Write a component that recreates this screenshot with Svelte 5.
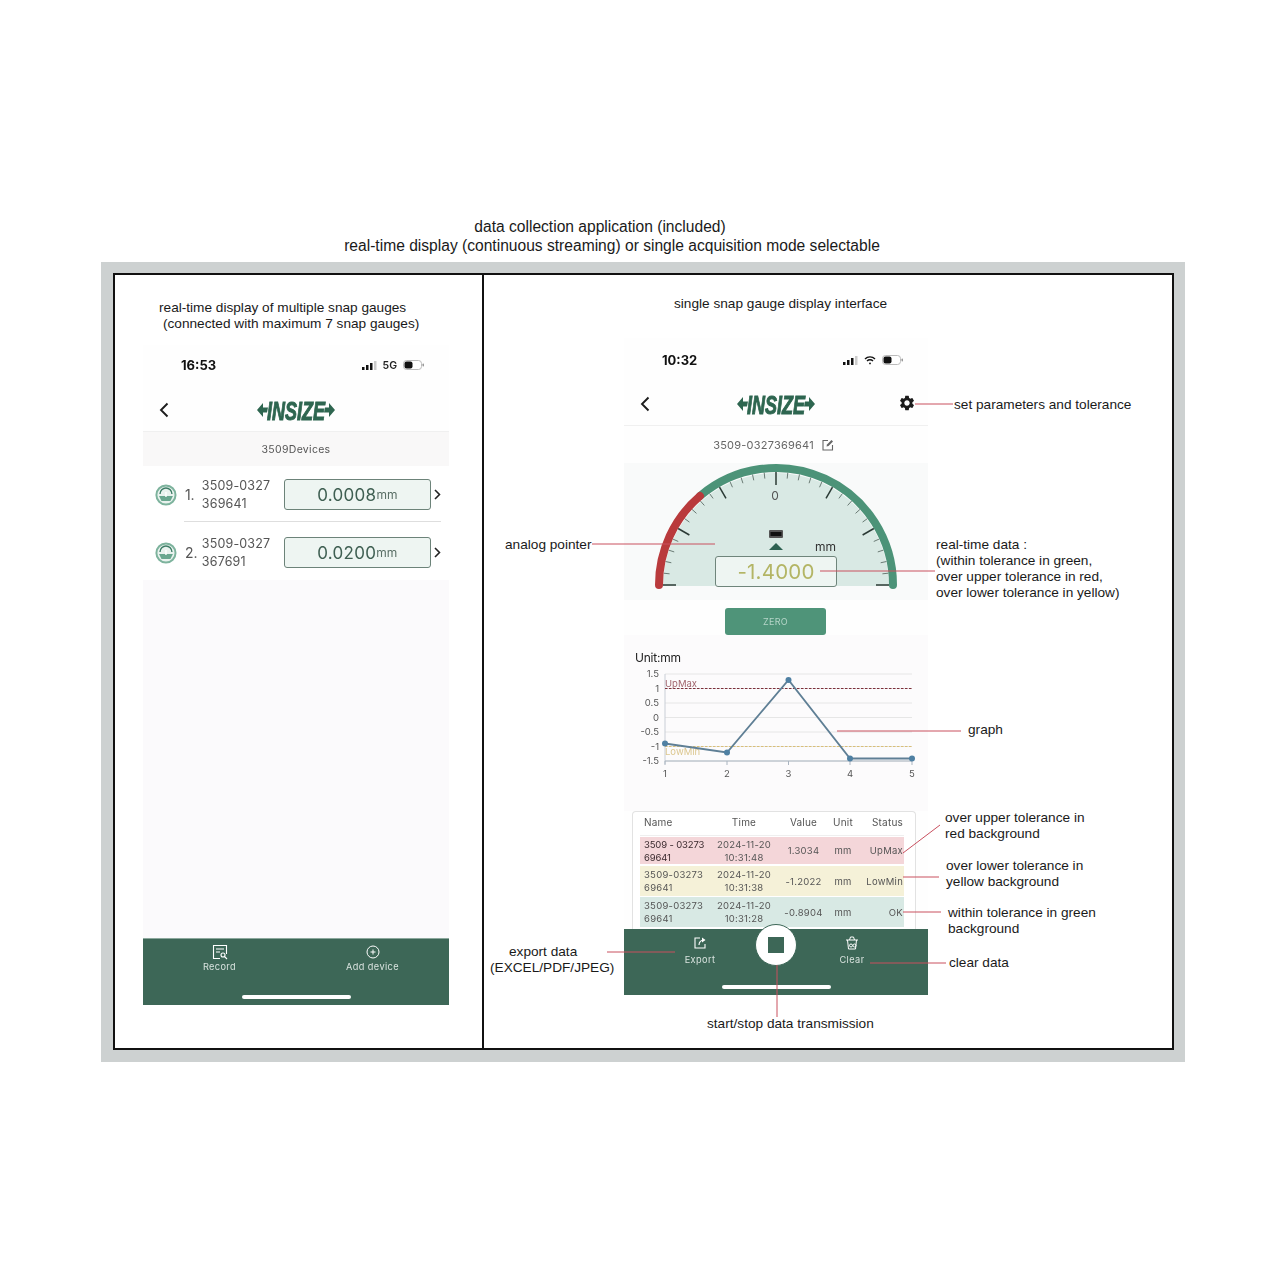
<script lang="ts">
  const notes = [
    { x: 954, y: 403.5, lines: ['set parameters and tolerance'] },
    { x: 505, y: 543.5, lines: ['analog pointer'] },
    {
      x: 936,
      y: 543.5,
      lines: ['real-time data :', '(within tolerance in green,', 'over upper tolerance in red,', 'over lower tolerance in yellow)']
    },
    { x: 968, y: 728.5, lines: ['graph'] },
    { x: 945, y: 816.5, lines: ['over upper tolerance in', 'red background'] },
    { x: 946, y: 864.5, lines: ['over lower tolerance in', 'yellow background'] },
    { x: 948, y: 911.5, lines: ['within tolerance in green', 'background'] },
    { x: 949, y: 961.5, lines: ['clear data'] },
    { x: 707, y: 1022.5, lines: ['start/stop data transmission'] }
  ];

  // leader lines, page coordinates
  const leaders = [
    [915, 404, 953, 404],
    [592, 544, 715, 544],
    [820, 571, 935, 571],
    [837, 731, 961, 731],
    [903, 853, 940, 825],
    [903, 877, 939, 877],
    [903, 912, 941, 912],
    [870, 963, 946, 963],
    [607, 952, 675, 952],
    [777, 965, 777, 1017]
  ];

  const devices = [
    { no: '1.', top: '3509-0327', bottom: '369641', value: '0.0008' },
    { no: '2.', top: '3509-0327', bottom: '367691', value: '0.0200' }
  ];

  const records = [
    { name: '3509 - 03273', sn: '69641', date: '2024-11-20', time: '10:31:48', value: '1.3034', status: 'UpMax', kind: 'up' },
    { name: '3509-03273', sn: '69641', date: '2024-11-20', time: '10:31:38', value: '-1.2022', status: 'LowMin', kind: 'low' },
    { name: '3509-03273', sn: '69641', date: '2024-11-20', time: '10:31:28', value: '-0.8904', status: 'OK', kind: 'ok' }
  ];

  // gauge ticks every 6 degrees, long one every 30
  const cx = 776;
  const cy = 585;
  const ticks = [];
  for (let a = -90; a <= 90; a += 6) {
    const rad = (a * Math.PI) / 180;
    const major = a % 30 === 0;
    const r1 = 113;
    const r2 = major ? 100 : 107;
    ticks.push({
      major,
      x1: cx + r1 * Math.sin(rad),
      y1: cy - r1 * Math.cos(rad),
      x2: cx + r2 * Math.sin(rad),
      y2: cy - r2 * Math.cos(rad)
    });
  }

  const yAxis = [
    ['1.5', 674],
    ['1', 688.5],
    ['0.5', 703],
    ['0', 717.5],
    ['-0.5', 732],
    ['-1', 746.5],
    ['-1.5', 761]
  ];
  const xAxis = [
    ['1', 665],
    ['2', 727],
    ['3', 788.5],
    ['4', 850],
    ['5', 912]
  ];
  const points = [
    [665, 743.5],
    [727, 752.5],
    [788.5, 680],
    [850, 758.5],
    [912, 758.5]
  ];
</script>

{#snippet logo()}
  <svg class="logo" viewBox="0 0 80 24" width="80" height="24" aria-label="INSIZE">
    <polygon points="1,12 7,5 7,9.5 12,9.5 11,14.5 7,14.5 7,19" />
    <polygon points="79,12 73,5 73,9.5 69,9.5 68,14.5 73,14.5 73,19" />
    <text x="11" y="21.500" textLength="58" lengthAdjust="spacingAndGlyphs">INSIZE</text>
  </svg>
{/snippet}

{#snippet signal()}
  <svg width="15" height="9" viewBox="0 0 15 9">
    <rect x="0" y="6" width="2.5" height="3" fill="#111" />
    <rect x="4" y="4" width="2.5" height="5" fill="#111" />
    <rect x="8" y="2" width="2.5" height="7" fill="#111" />
    <rect x="12" y="0" width="2.5" height="9" fill="#ccc" />
  </svg>
{/snippet}

{#snippet battery()}
  <svg width="22" height="10" viewBox="0 0 22 10">
    <rect x="0.5" y="0.5" width="18" height="9" rx="3" fill="#fff" stroke="#bbb" />
    <rect x="1.5" y="1.5" width="8" height="7" rx="2" fill="#111" />
    <rect x="19.5" y="3.5" width="1.5" height="3" rx="0.7" fill="#999" />
  </svg>
{/snippet}

{#snippet back()}
  <svg class="back" width="10" height="16" viewBox="0 0 10 16">
    <path d="M8.5 1.5 2 8l6.5 6.5" fill="none" stroke="#1c1c1c" stroke-width="1.9" />
  </svg>
{/snippet}

{#snippet chevron()}
  <svg width="7" height="11" viewBox="0 0 7 11">
    <path d="M1 1l4.5 4.5L1 10" fill="none" stroke="#222" stroke-width="1.6" />
  </svg>
{/snippet}

{#snippet gaugeIcon()}
  <svg width="22" height="22" viewBox="0 0 22 22">
    <circle cx="11" cy="11" r="9.6" fill="#e9f2ee" stroke="#7db39d" stroke-width="2" />
    <path d="M5 10a6 6 0 0 1 12 0" fill="none" stroke="#3e7d66" stroke-width="1.4" />
    <path d="M4 12h14l-2.5 5h-9z" fill="#6aa78f" />
    <path d="M11 8v5" stroke="#fff" stroke-width="1.4" />
  </svg>
{/snippet}

<div class="page">
  <div class="heading">
    <p class="heading-first">data collection application (included)</p>
    <p>real-time display (continuous streaming) or single acquisition mode selectable</p>
  </div>

  <div class="frame">
    <div class="sheet">
      <section class="panel panel-left">
        <div class="caption caption-left">
          <p>real-time display of multiple snap gauges</p>
          <p class="caption-second">(connected with maximum 7 snap gauges)</p>
        </div>

        <div class="phone phone-left">
          <div class="status">
            <span class="clock">16:53</span>
            <span class="status-icons">
              {@render signal()}
              <span class="fiveg">5G</span>
              {@render battery()}
            </span>
          </div>
          <div class="topbar">
            {@render back()}
            {@render logo()}
          </div>
          <div class="band">3509Devices</div>
          <div class="devices">
            {#each devices as d, i}
              <div class="device" class:device-last={i === devices.length - 1}>
                {@render gaugeIcon()}
                <span class="device-no">{d.no}</span>
                <span class="device-name">{d.top}<br />{d.bottom}</span>
                <span class="reading"><b>{d.value}</b><small>mm</small></span>
                {@render chevron()}
              </div>
            {/each}
          </div>
          <div class="empty"></div>
          <div class="tabbar tabbar-left">
            <div class="tabs">
              <div class="tab">
                <svg width="16" height="16" viewBox="0 0 16 16" fill="none" stroke="#fff" stroke-width="1.1">
                  <path d="M8 14.5H1.5v-13h13V10" />
                  <path d="M4 5h8M4 8h4" />
                  <circle cx="11" cy="11" r="2" />
                  <path d="M12.5 12.5 15 15" />
                </svg>
                <span>Record</span>
              </div>
              <div class="tab">
                <svg width="16" height="16" viewBox="0 0 16 16" fill="none" stroke="#fff" stroke-width="1">
                  <circle cx="8" cy="8" r="6" />
                  <path d="M5.5 8h5M8 5.5v5" />
                </svg>
                <span>Add device</span>
              </div>
            </div>
            <i class="home"></i>
          </div>
        </div>
      </section>

      <section class="panel panel-right">
        <div class="caption caption-right"><p>single snap gauge display interface</p></div>

        <div class="phone phone-right">
          <div class="status">
            <span class="clock">10:32</span>
            <span class="status-icons">
              {@render signal()}
              <svg width="12" height="9" viewBox="0 0 12 9" fill="none" stroke="#111" stroke-width="1.4">
                <path d="M1 3a7 7 0 0 1 10 0M3 5a4.2 4.2 0 0 1 6 0" />
                <circle cx="6" cy="7.4" r="0.9" fill="#111" stroke="none" />
              </svg>
              {@render battery()}
            </span>
          </div>
          <div class="topbar topbar-line">
            {@render back()}
            {@render logo()}
            <svg class="gear" width="18" height="18" viewBox="0 0 24 24">
              <path
                fill="#1c1c1c"
                d="M19.14 12.94c.04-.3.06-.61.06-.94 0-.32-.02-.64-.07-.94l2.03-1.58a.49.49 0 0 0 .12-.61l-1.92-3.32a.488.488 0 0 0-.59-.22l-2.39.96c-.5-.38-1.03-.7-1.62-.94l-.36-2.54a.484.484 0 0 0-.48-.41h-3.84c-.24 0-.43.17-.47.41l-.36 2.54c-.59.24-1.13.57-1.62.94l-2.39-.96c-.22-.08-.47 0-.59.22L2.74 8.87c-.12.21-.08.47.12.61l2.03 1.58c-.05.3-.09.63-.09.94s.02.64.07.94l-2.03 1.58a.49.49 0 0 0-.12.61l1.92 3.32c.12.22.37.29.59.22l2.39-.96c.5.38 1.03.7 1.62.94l.36 2.54c.05.24.24.41.48.41h3.84c.24 0 .44-.17.47-.41l.36-2.54c.59-.24 1.13-.56 1.62-.94l2.39.96c.22.08.47 0 .59-.22l1.92-3.32c.12-.22.07-.47-.12-.61l-2.01-1.58zM12 15.6c-1.98 0-3.6-1.62-3.6-3.6s1.62-3.6 3.6-3.6 3.6 1.62 3.6 3.6-1.62 3.6-3.6 3.6z"
              />
            </svg>
          </div>
          <div class="serial">
            <span>3509-0327369641</span>
            <svg width="12" height="12" viewBox="0 0 12 12" fill="none" stroke="#666" stroke-width="1.1">
              <path d="M6 1.5H1v9.5h9.5V6" />
              <path d="M4.5 7.5 5 5.5 9.5 1l1.5 1.5L6.500 7z" fill="#666" stroke="none" />
            </svg>
          </div>

          <div class="gauge">
            <svg viewBox="624 463 304 137" width="304" height="137">
              <path d="M663 586a113 113 0 0 1 226 0z" fill="#d9e9e4" />
              {#each ticks as t}
                <line
                  x1={t.x1}
                  y1={t.y1}
                  x2={t.x2}
                  y2={t.y2}
                  stroke={t.major ? '#2b3a35' : '#5e6e68'}
                  stroke-width={t.major ? 1.5 : 0.9}
                />
              {/each}
              <path d="M893 585A117 117 0 0 0 700 496" fill="none" stroke="#4c9378" stroke-width="8" stroke-linecap="round" />
              <path d="M700 496A117 117 0 0 0 659 585" fill="none" stroke="#b93a3c" stroke-width="8" stroke-linecap="round" />
              <text class="gauge-zero" x="775" y="500">0</text>
              <text class="gauge-unit" x="815" y="551">mm</text>
              <rect x="769" y="530" width="14" height="8" rx="1" fill="#555" />
              <rect x="770.500" y="532" width="11" height="4" fill="#111" />
              <polygon points="776,543 783,550 769,550" fill="#2d6151" />
            </svg>
            <div class="gauge-value">-1.4000</div>
          </div>

          <button class="zero">ZERO</button>

          <div class="chart">
            <span class="unit">Unit:mm</span>
            <svg viewBox="624 665 304 120" width="304" height="120">
              {#each yAxis as [label, y]}
                <line x1="665" x2="912" y1={y} y2={y} stroke="#e6e6e6" stroke-width="1" />
                <text class="tick" x="659" y={+y + 3} text-anchor="end">{label}</text>
              {/each}
              <line x1="665" x2="665" y1="674" y2="764" stroke="#c9ced6" />
              <line x1="665" x2="912" y1="761" y2="761" stroke="#a9b4c0" />
              {#each xAxis as [label, x]}
                <line x1={x} x2={x} y1="761" y2="765" stroke="#a9b4c0" />
                <text class="tick" x={x} y="777" text-anchor="middle">{label}</text>
              {/each}
              <line x1="665" x2="912" y1="688.500" y2="688.500" stroke="#7d2f3a" stroke-width="1" stroke-dasharray="2.500 1.500" />
              <line x1="665" x2="912" y1="746.500" y2="746.500" stroke="#d9bf78" stroke-width="1" stroke-dasharray="2.500 1.500" />
              <text class="limit" x="665" y="687" fill="#a0646c">UpMax</text>
              <text class="limit" x="665" y="755" fill="#dcc78f">LowMin</text>
              <polyline points={points.map((p) => p.join(',')).join(' ')} fill="none" stroke="#5f7f95" stroke-width="1.800" />
              {#each points as [x, y]}
                <circle cx={x} cy={y} r="3" fill="#4f80a3" />
              {/each}
            </svg>
          </div>

          <div class="records">
            <div class="records-head">
              <span>Name</span>
              <span>Time</span>
              <span>Value</span>
              <span>Unit</span>
              <span>Status</span>
            </div>
            {#each records as r}
              <div class="record {r.kind}">
                <span class="record-name">{r.name}<br />{r.sn}</span>
                <span>{r.date}<br />{r.time}</span>
                <span>{r.value}</span>
                <span>mm</span>
                <span>{r.status}</span>
              </div>
            {/each}
          </div>

          <div class="tabbar tabbar-right">
            <div class="tabs">
              <div class="tab">
                <svg width="16" height="16" viewBox="0 0 16 16" fill="none" stroke="#fff" stroke-width="1.1">
                  <path d="M8 3H3v10h10V9" />
                  <path d="M7 10c0-3 2-5 5-5" />
                  <path d="M10 2.500 13.500 5 10 7.500z" fill="#fff" stroke="none" />
                </svg>
                <span>Export</span>
              </div>
              <div class="tab">
                <svg width="16" height="16" viewBox="0 0 16 16" fill="none" stroke="#fff" stroke-width="1">
                  <path d="M2 5h12M5.500 5 6.500 2h3l1 3M3.500 5l1 9h7l1-9" />
                  <circle cx="7" cy="10.500" r="1.500" />
                  <circle cx="10.500" cy="10.500" r="1.500" />
                </svg>
                <span>Clear</span>
              </div>
            </div>
            <button class="stop" aria-label="Stop"><i></i></button>
            <i class="home"></i>
          </div>
        </div>
      </section>
    </div>
  </div>

  <!-- callouts sit over the picture -->
  <svg class="leaders" viewBox="0 0 1285 1285" width="1285" height="1285">
    {#each leaders as [x1, y1, x2, y2]}
      <line {x1} {y1} {x2} {y2} stroke="#c9505f" stroke-width="1" />
    {/each}
  </svg>
  {#each notes as n}
    <div class="note" style="left:{n.x}px;top:{n.y - 7}px">
      {#each n.lines as line}<div>{line}</div>{/each}
    </div>
  {/each}
  <div class="note note-export">
    <div class="note-export-first">export data</div>
    <div>(EXCEL/PDF/JPEG)</div>
  </div>
</div>

<style>
  :global(body) {
    margin: 0;
    background: #fff;
  }

  p {
    margin: 0;
  }

  .page {
    position: relative;
    width: 1285px;
    height: 1285px;
    padding-top: 218px;
    box-sizing: border-box;
    overflow: hidden;
    font-family: 'Liberation Sans', Arial, sans-serif;
    color: #1a1a1a;
  }

  .heading {
    height: 44px;
    text-align: center;
    font-size: 15.6px;
    line-height: 18.5px;
    margin-left: -61px;
  }

  .heading-first {
    padding-right: 24px;
  }

  .frame {
    box-sizing: border-box;
    margin-left: 101px;
    width: 1084px;
    height: 800px;
    padding: 11px 11px 12px 12px;
    background: #cdd1d1;
  }

  .sheet {
    display: grid;
    grid-template-columns: 369px 1fr;
    height: 100%;
    box-sizing: border-box;
    border: 2px solid #111;
    background: #fff;
  }

  .panel {
    min-width: 0;
  }

  .panel-left {
    border-right: 2px solid #111;
    box-sizing: border-box;
  }

  .caption {
    font-size: 13.65px;
    line-height: 16px;
  }

  .caption-left {
    height: 70px;
    padding: 25px 0 0 44px;
    box-sizing: border-box;
  }

  .caption-second {
    padding-left: 4px;
  }

  .caption-right {
    height: 63px;
    padding: 21px 0 0 190px;
    box-sizing: border-box;
  }

  .phone {
    display: flex;
    flex-direction: column;
    background: #fefefe;
    font-family: Inter, 'Liberation Sans', sans-serif;
    filter: blur(0.3px);
  }

  .phone-left {
    width: 306px;
    height: 660px;
    margin-left: 28px;
  }

  .phone-right {
    width: 304px;
    height: 657px;
    margin-left: 140px;
  }

  .status {
    display: flex;
    align-items: center;
    justify-content: space-between;
    height: 40px;
    padding: 0 24px 0 38px;
    flex: none;
  }

  .phone-right .status {
    height: 44px;
  }

  .clock {
    font-size: 13px;
    font-weight: 700;
    color: #111;
  }

  .status-icons {
    display: flex;
    align-items: center;
    gap: 6px;
  }

  .fiveg {
    font-size: 10.5px;
    font-weight: 600;
    color: #222;
  }

  .topbar {
    position: relative;
    display: flex;
    align-items: center;
    justify-content: center;
    height: 47px;
    padding-top: 3px;
    flex: none;
    border-bottom: 1px solid #f0f0f0;
    box-sizing: border-box;
  }

  .back {
    position: absolute;
    left: 16px;
    top: 17px;
  }

  .phone-right .topbar {
    height: 44px;
    padding-top: 0;
  }

  .phone-right .back {
    top: 14px;
  }

  .gear {
    position: absolute;
    right: 12px;
    top: 12px;
  }

  .logo {
    fill: #2e6650;
    overflow: visible;
  }

  .logo text {
    font-family: 'Liberation Sans', sans-serif;
    font-size: 26px;
    font-weight: 700;
    font-style: italic;
    stroke: #2e6650;
    stroke-width: 1px;
  }

  .band {
    height: 34px;
    flex: none;
    display: flex;
    align-items: center;
    justify-content: center;
    padding-top: 1px;
    box-sizing: border-box;
    background: #f9f8f8;
    font-size: 10.5px;
    letter-spacing: 0.3px;
    color: #555;
  }

  .devices {
    flex: none;
    background: #fff;
    padding: 13px 8px 0 12px;
    height: 114px;
    box-sizing: border-box;
  }

  .device {
    display: flex;
    align-items: center;
    height: 31px;
    padding-bottom: 12px;
    margin-bottom: 14px;
    border-bottom: 1px solid transparent;
    position: relative;
  }

  .device:not(.device-last)::after {
    content: '';
    position: absolute;
    left: 29px;
    right: 0;
    bottom: 0;
    height: 1.5px;
    background: #dedede;
  }

  .device-last {
    padding-bottom: 0;
    margin-bottom: 0;
    border: 0;
  }

  .device-no {
    font-size: 14px;
    color: #555;
    margin-left: 8px;
    width: 17px;
  }

  .device-name {
    font-size: 12.5px;
    line-height: 18px;
    letter-spacing: 0.15px;
    color: #555;
    width: 82px;
  }

  .reading {
    box-sizing: border-box;
    width: 148px;
    height: 31px;
    display: flex;
    align-items: center;
    justify-content: center;
    border: 1.5px solid #6c8379;
    border-radius: 3px;
    background: #eef5f2;
    color: #3f5f52;
    margin-right: 3px;
  }

  .reading b {
    font-weight: 400;
    font-size: 17px;
    letter-spacing: 0.3px;
  }

  .reading small {
    font-size: 12px;
    color: #5a6f66;
  }

  .empty {
    flex: 1;
    background: #fbfafc;
  }

  .tabbar {
    position: relative;
    flex: none;
    display: flex;
    flex-direction: column;
    box-sizing: border-box;
    background: #3d6757;
    z-index: 1;
  }

  .tabbar-left {
    height: 67px;
    padding-top: 5px;
    border-top: 1px solid #8ca89d;
  }

  .tabbar-right {
    height: 66px;
    padding-top: 6px;
  }

  .tabs {
    display: grid;
    grid-template-columns: 1fr 1fr;
  }

  .tab {
    display: flex;
    flex-direction: column;
    align-items: center;
    gap: 1px;
    font-size: 9.2px;
    letter-spacing: 0.4px;
    line-height: 11px;
    color: #d9e3df;
  }

  .tabbar-right .tab {
    gap: 3px;
  }

  .home {
    display: block;
    width: 109px;
    height: 4px;
    margin: auto auto 6.5px;
    border-radius: 2px;
    background: #fff;
  }

  .serial {
    height: 37px;
    flex: none;
    display: flex;
    align-items: center;
    justify-content: center;
    gap: 8px;
    font-size: 11px;
    letter-spacing: 0.22px;
    color: #666;
    padding-right: 5px;
  }

  .gauge {
    position: relative;
    height: 137px;
    flex: none;
    background: #f9fafa;
  }

  .gauge svg {
    display: block;
  }

  .gauge-zero {
    font-size: 12px;
    fill: #555;
    text-anchor: middle;
  }

  .gauge-unit {
    font-size: 12px;
    fill: #333;
  }

  .gauge-value {
    position: absolute;
    left: 91px;
    top: 93px;
    box-sizing: border-box;
    width: 122px;
    height: 31px;
    display: flex;
    align-items: center;
    justify-content: center;
    border: 1.2px solid #6f857b;
    border-radius: 3px;
    background: #eef5f2;
    font-size: 20.5px;
    color: #b3b565;
    letter-spacing: 0.2px;
  }

  .zero {
    display: block;
    flex: none;
    width: 101px;
    height: 27px;
    margin: 8px 0 0 101px;
    padding: 0;
    border: 0;
    border-radius: 3px;
    background: #4f9479;
    color: #b5d5c8;
    font-family: inherit;
    font-size: 9px;
    letter-spacing: 0.3px;
  }

  .chart {
    flex: none;
    height: 176px;
    box-sizing: border-box;
    padding-top: 15px;
    background: #fcfbfc;
  }

  .chart svg {
    display: block;
  }

  .unit {
    display: block;
    height: 15px;
    line-height: 16px;
    padding-left: 11px;
    font-size: 12px;
    letter-spacing: -0.2px;
    color: #222;
  }

  .tick {
    font-size: 9.5px;
    fill: #555;
  }

  .limit {
    font-size: 9.5px;
  }

  .records {
    flex: none;
    height: 118px;
    box-sizing: border-box;
    margin: 0 12px 0 8px;
    padding: 0 0 0 7px;
    border: 1.5px solid #e2e2e2;
    border-bottom: 0;
    border-radius: 4px 4px 0 0;
    background: #fff;
    overflow: hidden;
    font-size: 9.5px;
    line-height: 13px;
    color: #555;
  }

  .records-head,
  .record {
    display: grid;
    grid-template-columns: 64px 80px 39px 40px 41px;
    align-items: center;
    text-align: center;
  }

  .records-head {
    height: 21.5px;
    padding-bottom: 1.5px;
    margin-bottom: 1px;
    width: 264px;
    border-bottom: 1.5px solid #efefef;
    letter-spacing: 0.2px;
    font-size: 10px;
  }

  .records-head span:first-child,
  .record-name {
    text-align: left;
    padding-left: 4px;
    white-space: nowrap;
  }

  .records-head span:last-child,
  .record span:last-child {
    text-align: right;
    padding-right: 1px;
  }

  .record {
    width: 264px;
    height: 30px;
    letter-spacing: 0.25px;
    margin-bottom: 1px;
  }

  .up {
    height: 27px;
    margin-bottom: 2px;
    background: #f4d6d9;
  }

  .up .record-name {
    color: #3a2a2e;
    letter-spacing: -0.15px;
  }

  .low {
    background: #f5f1d8;
  }

  .ok {
    background: #d8e9e4;
  }

  .stop {
    position: absolute;
    left: 131px;
    top: -5px;
    width: 42px;
    height: 42px;
    padding: 0;
    box-sizing: border-box;
    display: flex;
    align-items: center;
    justify-content: center;
    border: 1px solid #3d6757;
    border-radius: 50%;
    background: #fff;
  }

  .stop i {
    display: block;
    width: 16px;
    height: 16px;
    background: #3d6757;
  }

  .leaders {
    position: absolute;
    left: 0;
    top: 0;
    z-index: 2;
    pointer-events: none;
  }

  .note {
    position: absolute;
    z-index: 3;
    font-size: 13.65px;
    line-height: 16.3px;
    white-space: nowrap;
  }

  .note-export {
    left: 490px;
    top: 943.5px;
  }

  .note-export-first {
    padding-left: 19px;
  }
</style>
